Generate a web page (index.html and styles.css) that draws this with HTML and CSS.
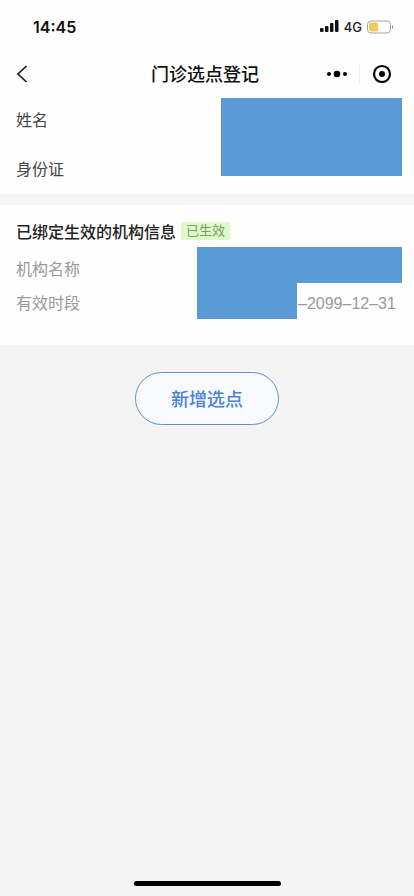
FILE: index.html
```
<!DOCTYPE html>
<html lang="zh-CN">
<head>
	<meta charset="UTF-8">
	<meta name="viewport" content="width=device-width, initial-scale=1">
	<title>门诊选点登记</title>
	<link rel="stylesheet" href="styles.css">
</head>
<body>
	<header class="header">
		<div class="status-bar">
			<span class="time">14:45</span>
			<div class="status-icons">
				<svg width="19" height="13" viewBox="0 0 19 13" fill="#111">
					<rect x="0" y="8" width="3.500" height="4" rx="1"/>
					<rect x="5" y="6" width="3.500" height="6" rx="1"/>
					<rect x="10" y="3" width="3.500" height="9" rx="1"/>
					<rect x="15" y="0" width="3.500" height="12" rx="1"/>
				</svg>
				<span class="network">4G</span>
				<svg width="27" height="14" viewBox="0 0 27 14">
					<rect x="0.5" y="1" width="23" height="12" rx="3.5" fill="#fff" stroke="#a5a5a5"/>
					<rect x="2" y="2.5" width="9" height="9" rx="2" fill="#f3c95a"/>
					<path d="M25 5v4c1.600-.5 1.600-3.500 0-4z" fill="#8a8a8a"/>
				</svg>
			</div>
		</div>
		<nav class="nav-bar">
			<button class="icon-btn back" aria-label="返回">
				<svg width="12" height="20" viewBox="0 0 12 20" fill="none" stroke="#1a1a1a" stroke-width="1.700">
					<path d="M10.500 2L2 10l8.500 8"/>
				</svg>
			</button>
			<h1 class="nav-title">门诊选点登记</h1>
			<div class="capsule">
				<button class="icon-btn" aria-label="更多">
					<svg width="20" height="8" viewBox="0 0 20 8" fill="#000">
						<circle cx="2" cy="4" r="2"/>
						<circle cx="10" cy="4" r="3.300"/>
						<circle cx="18" cy="4" r="2"/>
					</svg>
				</button>
				<span class="divider"></span>
				<button class="icon-btn" aria-label="关闭">
					<svg width="20" height="20" viewBox="0 0 20 20">
						<circle cx="10" cy="10" r="8" fill="none" stroke="#000" stroke-width="2.200"/>
						<circle cx="10" cy="10" r="3" fill="#000"/>
					</svg>
				</button>
			</div>
		</nav>
	</header>

	<main>
		<section class="card person">
			<div class="labels">
				<div>姓名</div>
				<div>身份证</div>
			</div>
			<div class="mask mask-person"></div>
		</section>

		<section class="card org">
			<div class="org-head">
				<h2 class="org-title">已绑定生效的机构信息</h2>
				<span class="tag">已生效</span>
			</div>
			<div class="org-body">
				<div class="org-labels">
					<div>机构名称</div>
					<div>有效时段</div>
				</div>
				<div class="org-values">
					<div class="mask mask-name"></div>
					<div class="period">
						<div class="mask mask-date"></div>
						<span class="period-end">–2099–12–31</span>
					</div>
				</div>
			</div>
		</section>

		<button class="add-btn">新增选点</button>
	</main>

	<div class="home-bar"></div>
</body>
</html>
```

FILE: styles.css
```
* {
	box-sizing: border-box;
}
body {
	margin: 0;
	min-height: 100vh;
	display: flex;
	flex-direction: column;
	background-color: #f4f4f4;
	color: #444;
	font-family: "Liberation Sans", "Noto Sans CJK SC", sans-serif;
	font-size: 16px;
}
h1, h2 {
	margin: 0;
}
svg {
	display: block;
}

/* Header */
.header {
	background-color: #fefefe;
}
.status-bar {
	display: flex;
	justify-content: space-between;
	align-items: center;
	height: 52px;
	padding: 1px 20px 0 33px;
}
.time {
	font-family: Inter, sans-serif;
	font-size: 16px;
	font-weight: 600;
	color: #111;
}
.status-icons {
	display: flex;
	align-items: center;
	gap: 5px;
}
.network {
	font-family: Inter, sans-serif;
	font-size: 13px;
	font-weight: 500;
	color: #222;
}
.nav-bar {
	display: grid;
	grid-template-columns: 1fr auto 1fr;
	align-items: center;
	height: 44px;
	padding: 0 22px 0 16px;
}
.nav-title {
	padding: 2px 0 0 2px;
	font-size: 18px;
	line-height: 24px;
	font-weight: 500;
	color: #111;
}
.icon-btn {
	padding: 0;
	border: none;
	background: none;
	cursor: pointer;
}
.back {
	justify-self: start;
}
.capsule {
	display: flex;
	justify-self: end;
	align-items: center;
	gap: 12px;
}
.divider {
	width: 1px;
	height: 20px;
	background-color: #f0f0f0;
}

/* Cards */
.card {
	background-color: #fefefe;
	padding: 0 12px 0 16px;
}
.mask {
	background-color: #5b9bd5;
}
.person {
	display: flex;
	justify-content: space-between;
	margin-bottom: 11px;
}
.labels {
	line-height: 49px;
}
.mask-person {
	width: 181px;
	height: 78px;
	margin-top: 2px;
}
.org {
	padding-top: 10px;
	padding-bottom: 24px;
}
.org-head {
	display: flex;
	align-items: center;
	gap: 5px;
	height: 32px;
}
.org-title {
	font-size: 16px;
	font-weight: 500;
	color: #222;
}
.tag {
	padding: 0 5px;
	border-radius: 2px;
	background-color: #dff7ca;
	color: #7a9e68;
	font-size: 13px;
	line-height: 18px;
}
.org-body {
	display: flex;
	justify-content: space-between;
	color: #999;
}
.org-labels {
	padding-top: 6px;
	line-height: 34px;
}
.mask-name {
	width: 205px;
	height: 36px;
}
.period {
	display: flex;
	align-items: flex-end;
}
.mask-date {
	width: 100px;
	height: 36px;
}
.period-end {
	padding-left: 1px;
	line-height: 30px;
}

/* Add button */
.add-btn {
	display: block;
	margin: 27px auto;
	padding: 3px 35px 0;
	border: 1px solid #5f8fd0;
	border-radius: 27px;
	background-color: #f7f9fc;
	color: #4a80d9;
	font-family: inherit;
	font-size: 18px;
	font-weight: 500;
	line-height: 48px;
	cursor: pointer;
}

.home-bar {
	width: 147px;
	height: 5px;
	margin: auto auto 10px;
	border-radius: 3px;
	background-color: #000;
}
```
